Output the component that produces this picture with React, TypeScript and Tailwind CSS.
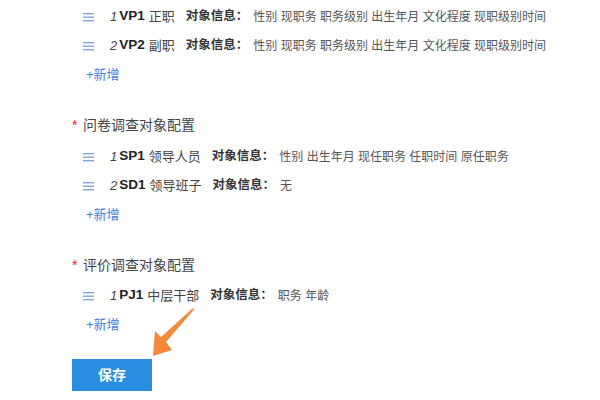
import React from "react";

type Item = { no: number; code: string; name: string; info: string };

const font = { fontFamily: '"Liberation Sans", "Noto Sans CJK SC", sans-serif' };

function Handle() {
  return (
    <svg width="11" height="10" viewBox="0 0 11 10" className="shrink-0">
      <rect x="0" y="1" width="11" height="1.4" fill="#7ea6dc" />
      <rect x="0" y="4.5" width="11" height="1.4" fill="#7ea6dc" />
      <rect x="0" y="8" width="11" height="1.4" fill="#7ea6dc" />
    </svg>
  );
}

function Row({ item }: { item: Item }) {
  return (
    <div className="flex h-[29px] items-center pl-[11px] text-[13px] text-[#333]">
      <Handle />
      <span className="ml-[16px] italic font-light text-[#444]">{item.no}</span>
      <span className="ml-[2px] text-[13.5px] font-bold text-[#222]">{item.code}</span>
      <span className="ml-[4px] text-[#444]">{item.name}</span>
      <span className="ml-[11px] text-[12.5px] font-bold text-[#333]">对象信息：</span>
      <span className="ml-[5px] text-[12px] text-[#555] whitespace-pre">{item.info}</span>
    </div>
  );
}

function AddLink() {
  return (
    <div className="flex h-[29px] items-center pl-[14px] text-[13px] text-[#3f7fe0]">+新增</div>
  );
}

function Title({ text }: { text: string }) {
  return (
    <div className="flex h-[29px] items-center text-[14px] text-[#444]">
      <span className="w-[11px] text-[#f5222d]">*</span>
      <span>{text}</span>
    </div>
  );
}

export default function App() {
  const leaders: Item[] = [
    { no: 1, code: "VP1", name: "正职", info: "性别 现职务 职务级别 出生年月 文化程度 现职级别时间" },
    { no: 2, code: "VP2", name: "副职", info: "性别 现职务 职务级别 出生年月 文化程度 现职级别时间" },
  ];
  const surveys: Item[] = [
    { no: 1, code: "SP1", name: "领导人员", info: "性别 出生年月 现任职务 任职时间 原任职务" },
    { no: 2, code: "SD1", name: "领导班子", info: "无" },
  ];
  const reviews: Item[] = [{ no: 1, code: "PJ1", name: "中层干部", info: "职务 年龄" }];

  return (
    <div className="relative h-[400px] w-[600px] overflow-hidden bg-white pl-[72px] pt-[2px]" style={font}>
      <div className="flex flex-col">
        {leaders.map((it) => (
          <Row key={it.code} item={it} />
        ))}
        <AddLink />
      </div>

      <div className="mt-[22px] flex flex-col">
        <Title text="问卷调查对象配置" />
        <div className="mt-[2px] flex flex-col">
          {surveys.map((it) => (
            <Row key={it.code} item={it} />
          ))}
          <AddLink />
        </div>
      </div>

      <div className="mt-[22px] flex flex-col">
        <Title text="评价调查对象配置" />
        <div className="mt-[1px] flex flex-col">
          {reviews.map((it) => (
            <Row key={it.code} item={it} />
          ))}
          <AddLink />
        </div>
      </div>

      <button className="mt-[20px] flex h-[32px] w-[80px] items-center justify-center bg-[#2b8de0] text-[14px] font-bold text-white">
        保存
      </button>

      {/* annotation arrow */}
      <svg className="absolute left-0 top-0" width="600" height="400" viewBox="0 0 600 400">
        <polygon
          points="193,308 194,309.5 166,342 172,350 153,356 155,331 161,337"
          fill="#f5883a"
        />
      </svg>
    </div>
  );
}
